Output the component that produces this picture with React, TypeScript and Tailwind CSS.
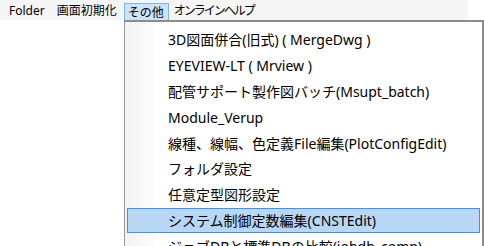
import React from 'react';

const items = [
  '3D図面併合(旧式) ( MergeDwg )',
  'EYEVIEW-LT ( Mrview )',
  '配管サポート製作図バッチ(Msupt_batch)',
  'Module_Verup',
  '線種、線幅、色定義File編集(PlotConfigEdit)',
  'フォルダ設定',
  '任意定型図形設定',
  'システム制御定数編集(CNSTEdit)',
  'ジョブDBと標準DBの比較(jobdb_comp)',
];

const font = 'font-["Noto_Sans","Noto_Sans_CJK_JP",sans-serif]';

export default function App() {
  return (
    <div className={`relative w-[484px] h-[246px] overflow-hidden bg-white text-black ${font}`}>
      {/* menu bar */}
      <div className="flex h-[20px] w-[468px] items-end bg-[#f5f5f5] text-[12px] leading-none">
        <span className="mb-[3px] ml-[9px]">Folder</span>
        <span className="mb-[3px] ml-[12px]">画面初期化</span>
        <span className="ml-[7px] flex h-[17px] items-center border border-b-0 border-[#7fb4e6] bg-[#cce4f7] pl-[3px] pr-[4px] pt-[2px]">
          その他
        </span>
        <span className="mb-[3px] ml-[5px] tracking-[-2px]">オンラインヘルプ</span>
      </div>

      {/* dropdown */}
      <div className="absolute left-[124px] top-[20px] h-[240px] w-[360px] border border-[#999] border-t-2 border-r-2 border-t-[#8c8c8c] border-r-[#8c8c8c] bg-white">
        <div className="absolute inset-y-0 left-0 w-[29px] bg-gradient-to-r from-[#f2f2f2] to-[#fbfbfb]" />
        <div className="relative flex flex-col pt-[5px]">
          {items.map((label, i) => {
            const active = i === 7;
            return (
              <div
                key={label}
                className={`mx-[2px] flex h-[25.8px] items-center whitespace-nowrap pl-[40px] text-[14px] ${
                  active ? 'border border-[#3c94e4] bg-[#b7d7f4]' : 'border border-transparent'
                }`}
              >
                {label}
              </div>
            );
          })}
        </div>
      </div>
    </div>
  );
}
